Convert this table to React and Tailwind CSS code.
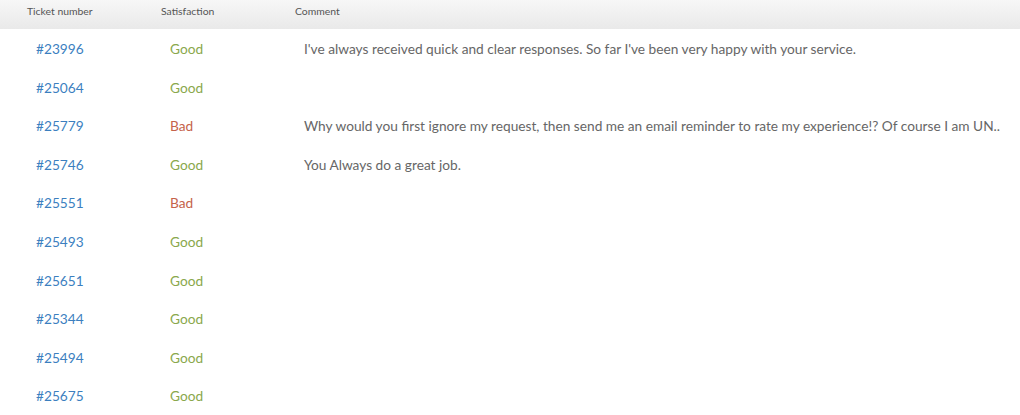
import React from 'react'

const rows = [
  { id: '#23996', rating: 'Good', comment: "I've always received quick and clear responses. So far I've been very happy with your service." },
  { id: '#25064', rating: 'Good', comment: '' },
  { id: '#25779', rating: 'Bad', comment: 'Why would you first ignore my request, then send me an email reminder to rate my experience!? Of course I am UN..' },
  { id: '#25746', rating: 'Good', comment: 'You Always do a great job.' },
  { id: '#25551', rating: 'Bad', comment: '' },
  { id: '#25493', rating: 'Good', comment: '' },
  { id: '#25651', rating: 'Good', comment: '' },
  { id: '#25344', rating: 'Good', comment: '' },
  { id: '#25494', rating: 'Good', comment: '' },
  { id: '#25675', rating: 'Good', comment: '' },
]

export default function App() {
  return (
    <div className="w-[1020px] h-[415px] overflow-hidden bg-white" style={{ fontFamily: 'Lato, "Open Sans", sans-serif' }}>
      {/* Header */}
      <div className="flex h-[29px] bg-gradient-to-b from-[#f7f7f7] to-[#e9e9e9] text-[10.4px] text-[#555555] pt-[4px]">
        <div className="w-[134px] pl-[27px]">Ticket number</div>
        <div className="w-[134px] pl-[27px]">Satisfaction</div>
        <div className="flex-1 pl-[27px]">Comment</div>
      </div>

      {/* Rows */}
      {rows.map((row) => (
        <div key={row.id} className="flex items-center h-[38.6px] text-[13.7px] pt-[2px]">
          <div className="w-[134px] pl-[36px] text-[#3c7fbf]">{row.id}</div>
          <div className={`w-[134px] pl-[36px] ${row.rating === 'Good' ? 'text-[#8aa84c]' : 'text-[#c5634b]'}`}>
            {row.rating}
          </div>
          <div className="flex-1 pl-[36px] text-[#666666]">{row.comment}</div>
        </div>
      ))}
    </div>
  )
}
